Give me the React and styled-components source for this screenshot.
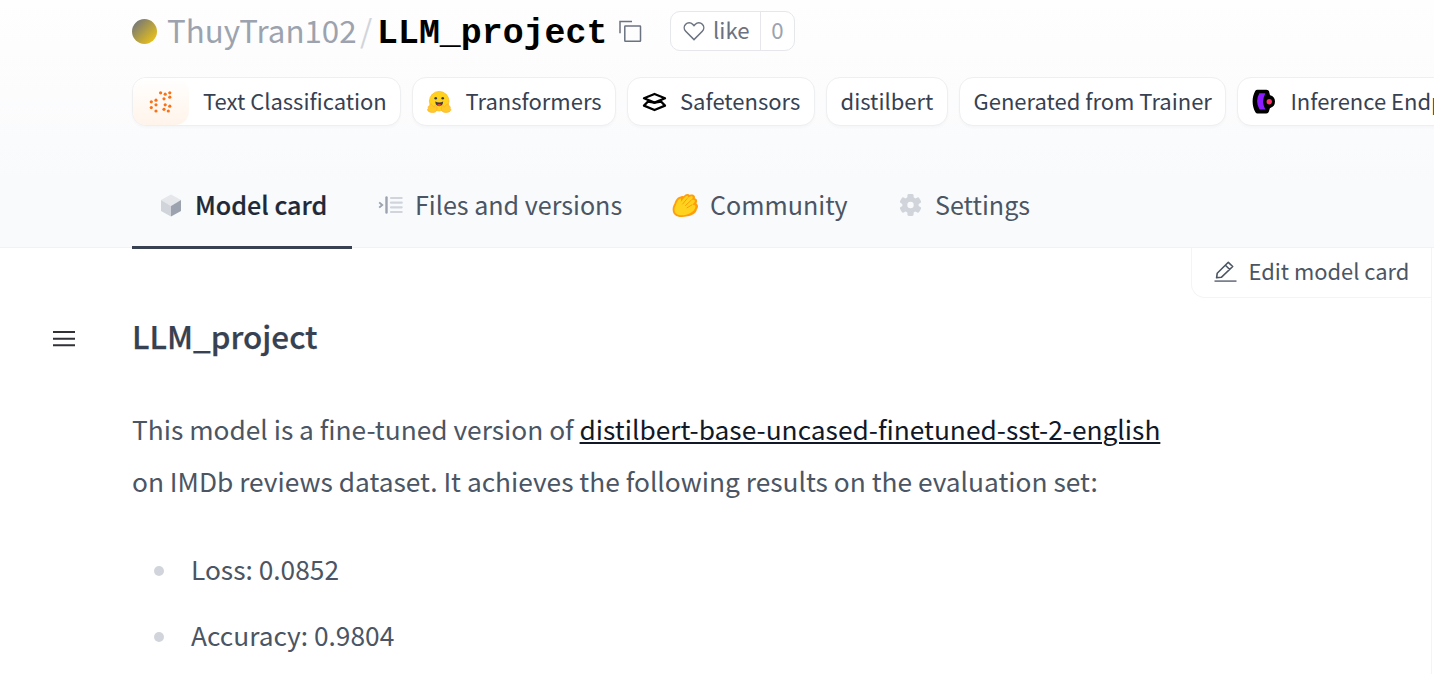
import React from 'react';
import styled, { createGlobalStyle } from 'styled-components';

const Global = createGlobalStyle`
  * { box-sizing: border-box; }
  body {
    margin: 0;
    background: #fff;
    color: #4b5563;
    font-family: "Noto Sans CJK SC", "Noto Sans", sans-serif;
    overflow: hidden;
  }
`;

const Page = styled.div`
  width: 1434px;
  height: 674px;
  overflow: hidden;
  display: flex;
  flex-direction: column;
`;

const Header = styled.header`
  height: 248px;
  flex: none;
  padding-left: 132px;
  display: flex;
  flex-direction: column;
  background: linear-gradient(to bottom, #fefefe 0%, #fcfcfd 40%, #f8fafc 75%, #f9fafc 100%);
  border-bottom: 1px solid #f1f2f4;
`;

const TitleRow = styled.div`
  height: 62px;
  flex: none;
  display: flex;
  align-items: center;
  white-space: pre;
`;

const Avatar = styled.span`
  width: 25px;
  height: 25px;
  border-radius: 50%;
  margin-right: 10px;
  background: linear-gradient(135deg, #6b7280 5%, #eac118 88%);
`;

const Owner = styled.span`
  font-size: 31.3px;
  line-height: 50px;
  padding-bottom: 3px;
  color: #9ca3af;
  width: 193px;
`;

const Slash = styled.span`
  font-size: 31.3px;
  line-height: 50px;
  padding-bottom: 3px;
  color: #d1d5db;
  width: 17px;
`;

const RepoName = styled.h1`
  margin: 0;
  padding-top: 6px;
  width: 230px;
  font: bold 34.9px/50px "Liberation Mono", monospace;
  color: #000;
`;

const CopyButton = styled.span`
  margin-left: 11px;
  display: flex;
`;

const LikeBox = styled.div`
  display: flex;
  width: 125px;
  height: 40px;
  margin-left: 28px;
  border: 1px solid #e5e7eb;
  border-radius: 10px;
  background: #fff;
  font-size: 22.2px;
  line-height: 35px;
  color: #6b7280;
  overflow: hidden;
`;

const LikeLabel = styled.span`
  width: 90px;
  padding: 0 0 3px 11px;
  display: flex;
  align-items: center;
  gap: 7px;
  border-right: 1px solid #e5e7eb;

  svg {
    margin-top: 2px;
  }
`;

const LikeCount = styled.span`
  flex: 1;
  text-align: center;
  color: #9ca3af;
`;

const TagRow = styled.div`
  display: flex;
  flex: none;
  gap: 11px;
  margin-top: 15px;
`;

const Tag = styled.span`
  flex: none;
  width: ${(p) => p.$width}px;
  height: 49px;
  display: flex;
  align-items: center;
  padding-left: 14px;
  border: 1px solid #eeeff1;
  border-radius: 14px;
  background: #fff;
  box-shadow: 0 2px 3px rgba(0, 0, 0, 0.025);
  font-size: 22px;
  line-height: 47px;
  color: #374151;
  white-space: nowrap;
  overflow: hidden;
`;

const TagText = styled.span`
  padding-bottom: 2px;
  line-height: 45px;
`;

const TagIcon = styled.span`
  display: flex;
  width: ${(p) => p.$width || 38.5}px;
  flex: none;
`;

const TaskIcon = styled.span`
  display: flex;
  align-items: center;
  justify-content: center;
  width: 56px;
  height: 47px;
  margin: 0 14px 0 -14px;
  flex: none;
  border-radius: 0 14px 14px 0;
  background: linear-gradient(to bottom, #fff, #fff4ea);
`;

const Tabs = styled.nav`
  display: flex;
  flex: none;
  margin-top: 39px;
  height: 84px;
`;

const Tab = styled.a`
  flex: none;
  display: flex;
  width: ${(p) => p.$width}px;
  padding-left: 28px;
  border-bottom: ${(p) => (p.$active ? '3px solid #374151' : '0')};
  color: ${(p) => (p.$active ? '#1f2937' : '#4b5563')};
  font-weight: ${(p) => (p.$active ? 500 : 400)};
  -webkit-text-stroke: ${(p) => (p.$active ? '0.2px #1f2937' : '0')};
  font-size: 25.1px;
  line-height: 79px;
  white-space: nowrap;
`;

const TabIcon = styled.span`
  display: flex;
  align-items: center;
  height: 80px;
  width: ${(p) => p.$width}px;
  margin-left: ${(p) => p.$shift || 0}px;
  flex: none;
`;

const Main = styled.main`
  flex: 1;
  display: flex;
`;

const Gutter = styled.div`
  width: 132px;
  flex: none;
  padding: 80px 0 0 53px;
`;

const Content = styled.div`
  width: 1059px;
  flex: none;
`;

const Heading = styled.h2`
  margin: 64px 0 0;
  font-size: 31.4px;
  line-height: 48px;
  font-weight: 500;
  -webkit-text-stroke: 0.25px #374151;
  color: #374151;
`;

const Paragraph = styled.p`
  margin: 43px 0 0;
  font-size: 26.3px;
  line-height: 52px;
  white-space: nowrap;
`;

const ModelLink = styled.a`
  color: #111827;
  text-decoration: underline;
  text-decoration-thickness: 2px;
  text-underline-offset: 2px;
  text-decoration-skip-ink: auto;
`;

const List = styled.ul`
  margin: 36px 0 0;
  padding: 0;
  list-style: none;
`;

const Item = styled.li`
  display: flex;
  align-items: center;
  gap: 27px;
  padding-left: 22px;
  margin-bottom: 14px;
  font-size: 26.3px;
  line-height: 52px;

  &::before {
    content: '';
    width: 10px;
    height: 10px;
    margin-top: 4px;
    border-radius: 50%;
    background: #d1d5db;
  }
`;

const Side = styled.aside`
  width: 241px;
  flex: none;
  border-right: 1px solid #f3f4f6;
`;

const EditButton = styled.div`
  height: 50px;
  display: flex;
  align-items: center;
  gap: 12px;
  padding: 0 0 3px 21.5px;
  border: solid #f3f4f6;
  border-width: 0 0 1px 1px;
  border-bottom-left-radius: 14px;
  font-size: 21.9px;
  line-height: 46px;
  white-space: nowrap;

  svg {
    margin-top: 2px;
  }
`;

const CopyIcon = () => (
  <svg width="24" height="24" viewBox="0 0 24 24" fill="none" stroke="#6b7280" strokeWidth="1.5">
    <rect x="6.8" y="7" width="15.7" height="15.2" rx="0.5" />
    <path d="M2 14.2V2.4H14" />
  </svg>
);

const HeartIcon = () => (
  <svg width="24" height="24" viewBox="0 0 32 32" fill="#6b7280">
    <path d="M22.45 6a5.47 5.47 0 0 1 3.91 1.64 5.7 5.7 0 0 1 0 8L16 26.13 5.64 15.64a5.7 5.7 0 0 1 0-8 5.48 5.48 0 0 1 7.82 0L16 10.24l2.53-2.58A5.44 5.44 0 0 1 22.45 6m0-2a7.47 7.47 0 0 0-5.34 2.24L16 7.36l-1.11-1.12a7.49 7.49 0 0 0-10.68 0 7.72 7.72 0 0 0 0 10.82L16 29l11.79-11.94a7.72 7.72 0 0 0 0-10.82A7.49 7.49 0 0 0 22.45 4z" />
  </svg>
);

const DOTS = [
  [11.6, 1.8], [16.2, 3.2], [20.8, 1.8], [20.8, 6.2], [15, 7.8],
  [7, 9.2], [2.3, 10.8], [16.2, 13.8], [7, 13.8], [20.8, 15.2],
  [2.3, 16.6], [7, 20], [15, 18.3], [19.3, 20],
];

const ClassificationIcon = () => (
  <svg width="24" height="22" viewBox="0 0 24 22" fill="#f97316">
    {DOTS.map(([x, y]) => <circle key={`${x}-${y}`} cx={x} cy={y} r="1.6" />)}
  </svg>
);

const HuggingIcon = () => (
  <svg width="25" height="24" viewBox="0 0 25 24">
    <circle cx="12.2" cy="11.2" r="9.8" fill="#ffd21e" stroke="#ffb21a" strokeWidth="0.7" />
    <circle cx="8.7" cy="8.3" r="1.3" fill="#3a3b45" />
    <circle cx="15.7" cy="8.3" r="1.3" fill="#3a3b45" />
    <path d="M8.2 11.6Q12.2 13.4 16.2 11.6Q15.7 16.2 12.2 16.2Q8.7 16.2 8.2 11.6Z" fill="#3a3b45" />
    <path d="M9.8 15.2Q12.2 12.9 14.6 15.2Q12.2 16.8 9.8 15.2Z" fill="#f94040" />
    <path d="M1.5 21.4C0 20 0.6 18.8 1.4 18.3C0.6 17 1.6 15.6 2.6 16.1C2.6 14 4.2 13.5 5.1 14.8L7 17.2L7.8 15.8C9.6 15 10.1 17 10.1 18.7C10.2 23 4.5 23.2 1.5 21.4Z" fill="#ffc927" stroke="#ffb02a" strokeWidth="0.7" />
    <path d="M22.9 21.4C24.4 20 23.8 18.8 23 18.3C23.8 17 22.8 15.6 21.8 16.1C21.8 14 20.2 13.5 19.3 14.8L17.4 17.2L16.6 15.8C14.8 15 14.3 17 14.3 18.7C14.2 23 19.9 23.2 22.9 21.4Z" fill="#ffc927" stroke="#ffb02a" strokeWidth="0.7" />
  </svg>
);

const SafetensorsIcon = () => (
  <svg width="25" height="20" viewBox="0 0 25 20" fill="none" stroke="#000" strokeWidth="2.3" strokeLinejoin="round">
    <path d="M12.5 2L23 6.2L12.5 10.6L2 6.2Z" />
    <path d="M6 9.5L2 13.6L12.5 18L23 13.6L19 9.5L12.5 10.6Z" />
  </svg>
);

const InferenceIcon = () => (
  <svg width="25" height="25" viewBox="0 0 25 25">
    <path d="M5.3 0.7H14.5Q16.5 0.7 17 2.3L18 6.2A6.6 6.6 0 0 1 18 19L16.8 22.7Q16.3 24.5 14.3 24.5H5.5Q4.2 24.5 3.4 23.2C-0.3 17-0.3 8.3 3.2 2.1Q4 0.7 5.3 0.7Z" fill="#000" />
    <path d="M7.4 4.3H13.4L11.8 8.2Q10.2 12.5 11.8 16.7L13.3 20.5H7.6Q2.5 12.5 7.4 4.3Z" fill="#8b1cff" />
    <circle cx="17.3" cy="12.7" r="2.7" fill="#ff3270" />
  </svg>
);

const CubeIcon = () => (
  <svg width="22" height="23" viewBox="0 0 22 23">
    <path d="M11 0.5L21 6L11 12L1 6Z" fill="#e5e7eb" />
    <path d="M1 6L11 12V22.6L1 17Z" fill="#d1d5db" />
    <path d="M21 6L11 12V22.6L21 17Z" fill="#9ca3af" />
  </svg>
);

const FilesIcon = () => (
  <svg width="25" height="18" viewBox="0 0 25 18" fill="none">
    <path d="M1.2 6.4L4.2 9L1.2 11.6" stroke="#9ca3af" strokeWidth="1.9" />
    <path d="M8.5 1.4V16.6" stroke="#9ca3af" strokeWidth="2.4" strokeLinecap="round" />
    <path d="M13 2H23.7M13 6.7H23.7M13 11.3H23.7M13 16H23.7" stroke="#d1d5db" strokeWidth="2.2" strokeLinecap="round" />
  </svg>
);

const CommunityIcon = () => (
  <svg width="27" height="25" viewBox="0 0 27 25">
    <path d="M3 22C0 19.5 0 14 2.5 10.5C3 8 5.5 4 8 3.8C9.2 3 10.6 2.8 11.8 3.2C13.4 0.6 16.5 0.4 17.7 2C20.5.5 24 2.5 22.8 5.3C25.5 5.7 25.5 8.8 24.4 10.4C26.5 11.8 26.6 14.2 24.8 16.5C24.5 20 20 22.5 15.5 23.3C11 24.4 5.5 24.6 3 22Z" fill="#ff9d0b" />
    <path d="M4.4 20.8C1.8 18.7 2 14.6 4 11.7C4.8 8.7 6.5 5.8 8.3 5.5C9.6 5.3 9.2 7.8 8.5 9.7C10.4 6.7 13.3 2.8 15.3 2.7C16.7 2.8 15.8 4.6 15 5.7C16.4 4.5 19 2.6 20.4 3.6C21.6 4.7 20.1 6.2 19.2 7.2C21 6.3 23 6.7 22.9 8.2C22.7 9.7 20.9 11 19.7 12C21.4 11.2 23.9 12 23.4 13.9C23 16.3 21.2 18.5 18.4 20C14 22.5 7.4 23.3 4.4 20.8Z" fill="#ffd21e" />
    <path d="M15 5.7L10.7 11M19.2 7.2L13.5 12.5M19.7 12L15 14.8" stroke="#ff9d0b" strokeWidth="1" strokeLinecap="round" fill="none" />
  </svg>
);

const GearIcon = () => (
  <svg width="21" height="22" viewBox="0 0 21 22">
    <g fill="#d1d5db">
      <circle cx="10.5" cy="11" r="8.2" />
      {[0, 60, 120].map((a) => (
        <rect key={a} x="7.4" y="0" width="6.2" height="22" rx="1.4" transform={`rotate(${a} 10.5 11)`} />
      ))}
    </g>
    <circle cx="10.5" cy="11" r="3.2" fill="#f9fafc" />
  </svg>
);

const PencilIcon = () => (
  <svg width="23" height="22" viewBox="0 0 23 22" fill="none" stroke="#4b5563" strokeWidth="1.6">
    <path d="M2.6 16.8L3.2 12.3L14.3 1.3L18.7 5.5L7.3 16.3L2.6 16.8ZM11.4 4.3L15.7 8.5" strokeLinejoin="round" />
    <path d="M0.5 20.1H22.5" stroke="#6b7280" />
  </svg>
);

const MenuIcon = () => (
  <svg width="22" height="17" viewBox="0 0 22 17" stroke="#303236" strokeWidth="2">
    <path d="M0 2H22M0 8.7H22M0 15.2H22" />
  </svg>
);

export default function App() {
  return (
    <Page>
      <Global />
      <Header>
        <TitleRow>
          <Avatar />
          <Owner>ThuyTran102</Owner>
          <Slash>/</Slash>
          <RepoName>LLM_project</RepoName>
          <CopyButton><CopyIcon /></CopyButton>
          <LikeBox>
            <LikeLabel><HeartIcon />like</LikeLabel>
            <LikeCount>0</LikeCount>
          </LikeBox>
        </TitleRow>
        <TagRow>
          <Tag $width={269}><TaskIcon><ClassificationIcon /></TaskIcon><TagText>Text Classification</TagText></Tag>
          <Tag $width={204}><TagIcon><HuggingIcon /></TagIcon><TagText>Transformers</TagText></Tag>
          <Tag $width={187.6}><TagIcon $width={38}><SafetensorsIcon /></TagIcon><TagText>Safetensors</TagText></Tag>
          <Tag $width={122}><TagText>distilbert</TagText></Tag>
          <Tag $width={267.8}><TagText>Generated from Trainer</TagText></Tag>
          <Tag $width={310}><TagIcon $width={38}><InferenceIcon /></TagIcon><TagText>Inference Endpoints</TagText></Tag>
        </TagRow>
        <Tabs>
          <Tab $active $width={220}><TabIcon $width={35}><CubeIcon /></TabIcon>Model card</Tab>
          <Tab $width={292}><TabIcon $width={37.5} $shift={-2.5}><FilesIcon /></TabIcon>Files and versions</Tab>
          <Tab $width={228}><TabIcon $width={38}><CommunityIcon /></TabIcon>Community</Tab>
          <Tab $width={200}><TabIcon $width={35}><GearIcon /></TabIcon>Settings</Tab>
        </Tabs>
      </Header>
      <Main>
        <Gutter><MenuIcon /></Gutter>
        <Content>
          <Heading>LLM_project</Heading>
          <Paragraph>
            This model is a fine-tuned version of <ModelLink>distilbert-base-uncased-finetuned-sst-2-english</ModelLink>
            <br />
            on IMDb reviews dataset. It achieves the following results on the evaluation set:
          </Paragraph>
          <List>
            <Item>Loss: 0.0852</Item>
            <Item>Accuracy: 0.9804</Item>
          </List>
        </Content>
        <Side>
          <EditButton><PencilIcon />Edit model card</EditButton>
        </Side>
      </Main>
    </Page>
  );
}
